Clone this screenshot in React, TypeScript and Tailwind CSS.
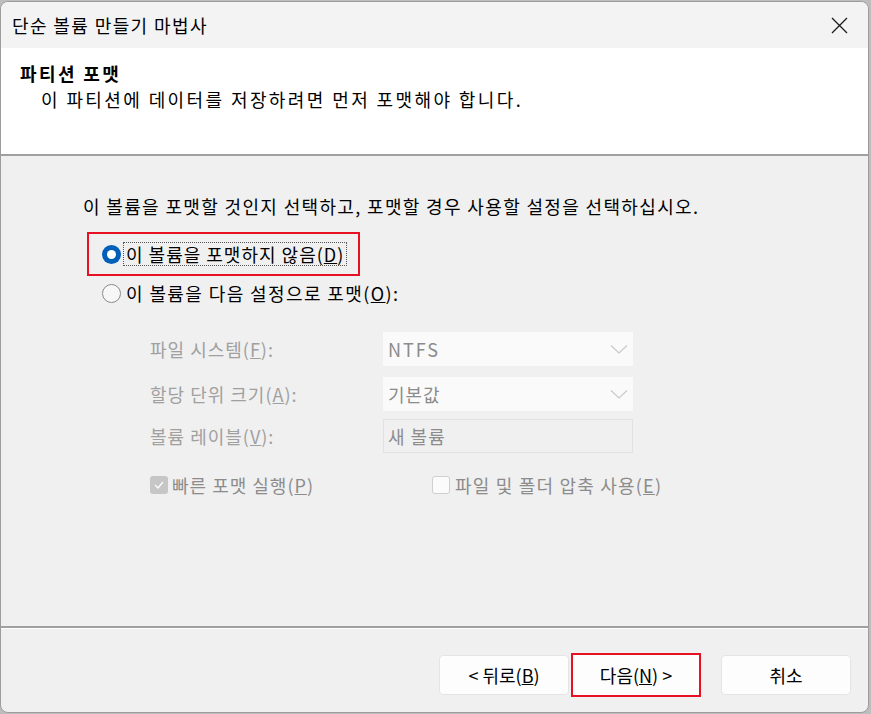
import React from 'react';

const font = { fontFamily: '"Noto Sans CJK KR", "Noto Sans", sans-serif' };

function Radio({ checked }: { checked?: boolean }) {
  return checked ? (
    <span className="w-[19px] h-[19px] rounded-full bg-[#005fb8] flex items-center justify-center shrink-0">
      <span className="w-[9px] h-[9px] rounded-full bg-white" />
    </span>
  ) : (
    <span className="w-[19px] h-[19px] rounded-full border border-[#8a8a8a] bg-[#f7f7f7] shrink-0" />
  );
}

function Combo({ value, wide }: { value: string; wide?: boolean }) {
  return (
    <div className="w-[250px] h-[34px] bg-[#fafafa] flex items-center justify-between pl-[5px] pr-[5px]">
      <span className={wide ? 'text-[#8c8c8c] tracking-[2px]' : 'text-[#8c8c8c]'}>{value}</span>
      <svg width="18" height="10" viewBox="0 0 18 10" fill="none">
        <path d="M1 1.5 L9 9 L17 1.5" stroke="#c8c8c8" strokeWidth="1.1" />
      </svg>
    </div>
  );
}

export default function App() {
  return (
    <div className="w-[871px] h-[714px] bg-[#bdbdbd] pt-[1px] overflow-hidden" style={font}>
      <div className="w-[869px] h-[712px] rounded-lg border border-[#9c9c9c] overflow-hidden flex flex-col bg-[#f0f0f0] text-black">
        {/* title bar */}
        <div className="h-[46px] shrink-0 bg-[#f3f3f3] flex items-center justify-between pl-[11px] pr-[20px]">
          <span className="text-[18px] tracking-[1.4px]">단순 볼륨 만들기 마법사</span>
          <svg width="17" height="17" viewBox="0 0 17 17">
            <path d="M1 1 L16 16 M16 1 L1 16" stroke="#1a1a1a" strokeWidth="1.3" />
          </svg>
        </div>

        {/* header */}
        <div className="h-[108px] shrink-0 bg-white border-b-2 border-[#a0a0a0] pl-[19px] pt-[12px]">
          <div className="text-[18px] font-bold leading-[26px] tracking-[2.4px]">파티션 포맷</div>
          <div className="text-[18px] leading-[26px] pl-[21px] tracking-[2.4px]">
            이 파티션에 데이터를 저장하려면 먼저 포맷해야 합니다.
          </div>
        </div>

        {/* body */}
        <div className="flex-1 pl-[82px] pt-[37px] text-[18px] tracking-[1px]">
          <div className="leading-[26px] tracking-[1.35px]">
            이 볼륨을 포맷할 것인지 선택하고, 포맷할 경우 사용할 설정을 선택하십시오.
          </div>

          <div className="mt-[13px] ml-[4px] w-[273px] h-[44px] border-2 border-[#e81123] flex items-center pl-[13px]">
            <Radio checked />
            <span className="ml-[2px] px-[2px] border border-dotted border-[#555] leading-[22px]">
              이 볼륨을 포맷하지 않음(<u>D</u>)
            </span>
          </div>

          <div className="mt-[4px] ml-[19px] h-[26px] flex items-center">
            <Radio />
            <span className="ml-[5px] leading-[26px] tracking-[1.4px]">
              이 볼륨을 다음 설정으로 포맷(<u>O</u>):
            </span>
          </div>

          <div className="ml-[67px] mt-[26px] text-[#a0a0a0]">
            <div className="flex items-center">
              <span className="w-[233px]">파일 시스템(<u>F</u>):</span>
              <Combo value="NTFS" wide />
            </div>
            <div className="flex items-center mt-[11px]">
              <span className="w-[233px]">할당 단위 크기(<u>A</u>):</span>
              <Combo value="기본값" />
            </div>
            <div className="flex items-center mt-[8px]">
              <span className="w-[233px]">볼륨 레이블(<u>V</u>):</span>
              <div className="w-[250px] h-[34px] border border-[#e2e2e2] bg-[#f0f0f0] pl-[4px] flex items-center text-[#8c8c8c]">
                새 볼륨
              </div>
            </div>
            <div className="flex items-center mt-[19px] h-[26px]">
              <div className="w-[282px] flex items-center">
                <span className="w-[18px] h-[18px] rounded-[3px] bg-[#c6c6c6] flex items-center justify-center shrink-0">
                  <svg width="10" height="8" viewBox="0 0 10 8">
                    <path d="M1 4 L4 7 L9 1" stroke="#fff" strokeWidth="1.2" fill="none" />
                  </svg>
                </span>
                <span className="ml-[4px] text-[#8c8c8c]">빠른 포맷 실행(<u>P</u>)</span>
              </div>
              <span className="w-[18px] h-[18px] rounded-[3px] border border-[#cfcfcf] bg-[#fbfbfb] shrink-0" />
              <span className="ml-[5px] text-[#8c8c8c] tracking-[1.2px]">파일 및 폴더 압축 사용(<u>E</u>)</span>
            </div>
          </div>
        </div>

        {/* footer */}
        <div className="h-[86px] shrink-0 border-t-2 border-[#a0a0a0] shadow-[inset_0_1px_0_#ffffff] flex items-start pt-[27px] pl-[438px] text-[18px]">
          <button className="w-[130px] h-[40px] bg-[#fdfdfd] border border-[#e5e5e5] rounded-[4px]">
            &lt; 뒤로(<u>B</u>)
          </button>
          <button className="ml-[2px] -mt-[2px] w-[130px] h-[44px] bg-[#fdfdfd] border-2 border-[#e81123]">
            다음(<u>N</u>) &gt;
          </button>
          <button className="ml-[20px] w-[130px] h-[40px] bg-[#fdfdfd] border border-[#e5e5e5] rounded-[4px]">
            취소
          </button>
        </div>
      </div>
    </div>
  );
}
